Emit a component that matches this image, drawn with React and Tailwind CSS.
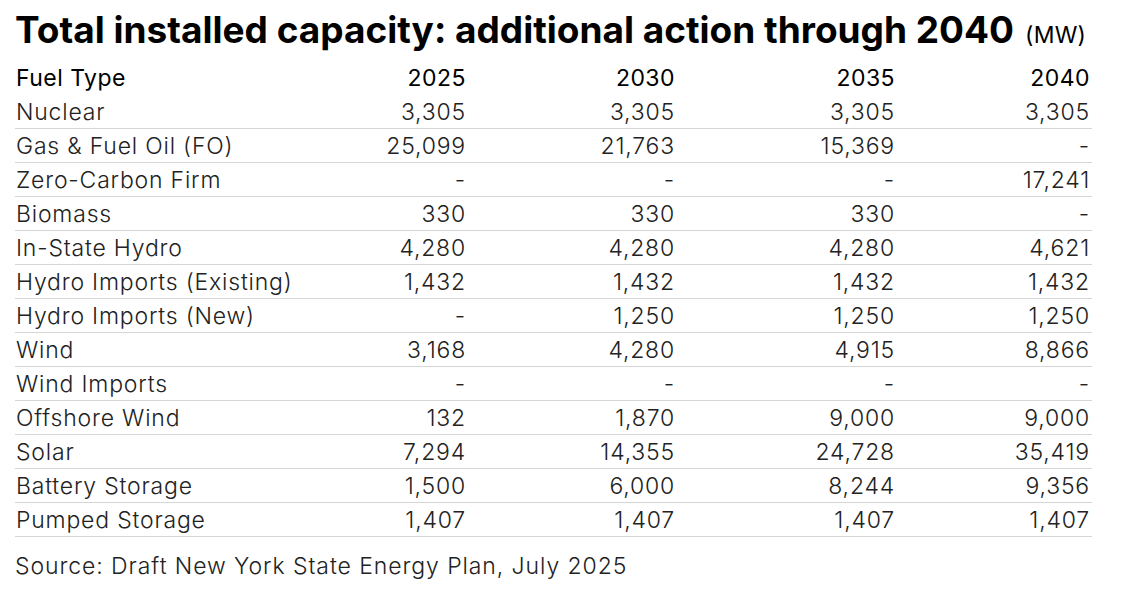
import React from "react";

const rows = [
  ["Nuclear", "3,305", "3,305", "3,305", "3,305"],
  ["Gas & Fuel Oil (FO)", "25,099", "21,763", "15,369", "-"],
  ["Zero-Carbon Firm", "-", "-", "-", "17,241"],
  ["Biomass", "330", "330", "330", "-"],
  ["In-State Hydro", "4,280", "4,280", "4,280", "4,621"],
  ["Hydro Imports (Existing)", "1,432", "1,432", "1,432", "1,432"],
  ["Hydro Imports (New)", "-", "1,250", "1,250", "1,250"],
  ["Wind", "3,168", "4,280", "4,915", "8,866"],
  ["Wind Imports", "-", "-", "-", "-"],
  ["Offshore Wind", "132", "1,870", "9,000", "9,000"],
  ["Solar", "7,294", "14,355", "24,728", "35,419"],
  ["Battery Storage", "1,500", "6,000", "8,244", "9,356"],
  ["Pumped Storage", "1,407", "1,407", "1,407", "1,407"],
];

const grid = "grid grid-cols-[300px_151px_209px_220px_195px] pr-[2px] whitespace-nowrap";

export default function App() {
  return (
    <div className="w-[1132px] h-[598px] bg-white font-['Inter',sans-serif] text-[#222]">
      <div className="pl-[15px] pt-[8px] w-[1092px]">
        <h1 className="flex items-baseline text-black whitespace-nowrap">
          <span className="text-[37px] font-bold tracking-[0em] leading-[44px]">
            Total installed capacity: additional action through 2040
          </span>
          <span className="ml-[11px] text-[23px] font-normal tracking-[0.01em]">(MW)</span>
        </h1>
        <div className={`${grid} mt-[8px] h-[34px] items-center text-[23px] tracking-[0.02em] text-black`}>
          <div className="pl-[1px]">Fuel Type</div>
          <div className="text-right">2025</div>
          <div className="text-right">2030</div>
          <div className="text-right">2035</div>
          <div className="text-right">2040</div>
        </div>
        {rows.map((r) => (
          <div
            key={r[0]}
            className={`${grid} h-[34px] items-center border-b border-[#d6d6d6] text-[23px] font-light tracking-[0.035em] text-[#222]`}
          >
            <div className="pl-[1px]">{r[0]}</div>
            <div className="text-right">{r[1]}</div>
            <div className="text-right">{r[2]}</div>
            <div className="text-right">{r[3]}</div>
            <div className="text-right">{r[4]}</div>
          </div>
        ))}
        <div className="mt-[12px] text-[23px] font-light tracking-[0.04em] text-[#222]">
          Source: Draft New York State Energy Plan, July 2025
        </div>
      </div>
    </div>
  );
}
